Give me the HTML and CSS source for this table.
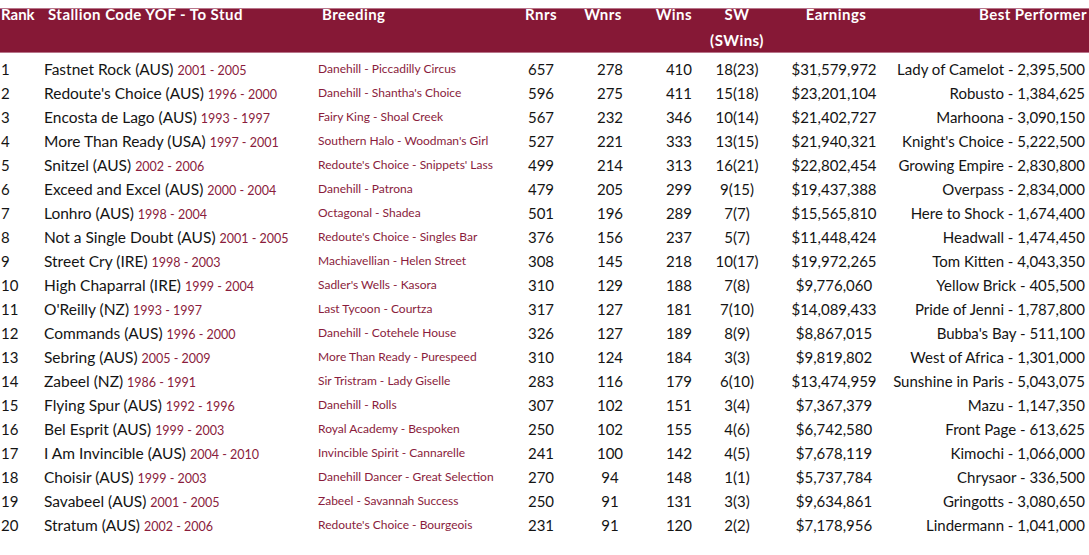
FILE: index.html
```html
<!DOCTYPE html>
<html>
<head>
<meta charset="utf-8">
<link rel="stylesheet" href="styles.css">
</head>
<body>
<div class="table">
  <div class="head">
    <div class="hc h-rank">Rank</div>
    <div class="hc h-stallion">Stallion Code YOF - To Stud</div>
    <div class="hc h-breed">Breeding</div>
    <div class="hc h-rnrs">Rnrs</div>
    <div class="hc h-wnrs">Wnrs</div>
    <div class="hc h-wins">Wins</div>
    <div class="hc h-sw">SW<br>(SWins)</div>
    <div class="hc h-earn">Earnings</div>
    <div class="hc h-best">Best Performer</div>
  </div>
  <div class="body">
    <div class="row"><div class="c-rank">1</div><div class="c-stallion">Fastnet Rock (AUS) <span class="yr">2001 - 2005</span></div><div class="c-breed">Danehill - Piccadilly Circus</div><div class="c-rnrs">657</div><div class="c-wnrs">278</div><div class="c-wins">410</div><div class="c-sw">18(23)</div><div class="c-earn">$31,579,972</div><div class="c-best">Lady of Camelot - 2,395,500</div></div>
    <div class="row"><div class="c-rank">2</div><div class="c-stallion">Redoute's Choice (AUS) <span class="yr">1996 - 2000</span></div><div class="c-breed">Danehill - Shantha's Choice</div><div class="c-rnrs">596</div><div class="c-wnrs">275</div><div class="c-wins">411</div><div class="c-sw">15(18)</div><div class="c-earn">$23,201,104</div><div class="c-best">Robusto - 1,384,625</div></div>
    <div class="row"><div class="c-rank">3</div><div class="c-stallion">Encosta de Lago (AUS) <span class="yr">1993 - 1997</span></div><div class="c-breed">Fairy King - Shoal Creek</div><div class="c-rnrs">567</div><div class="c-wnrs">232</div><div class="c-wins">346</div><div class="c-sw">10(14)</div><div class="c-earn">$21,402,727</div><div class="c-best">Marhoona - 3,090,150</div></div>
    <div class="row"><div class="c-rank">4</div><div class="c-stallion">More Than Ready (USA) <span class="yr">1997 - 2001</span></div><div class="c-breed">Southern Halo - Woodman's Girl</div><div class="c-rnrs">527</div><div class="c-wnrs">221</div><div class="c-wins">333</div><div class="c-sw">13(15)</div><div class="c-earn">$21,940,321</div><div class="c-best">Knight's Choice - 5,222,500</div></div>
    <div class="row"><div class="c-rank">5</div><div class="c-stallion">Snitzel (AUS) <span class="yr">2002 - 2006</span></div><div class="c-breed">Redoute's Choice - Snippets' Lass</div><div class="c-rnrs">499</div><div class="c-wnrs">214</div><div class="c-wins">313</div><div class="c-sw">16(21)</div><div class="c-earn">$22,802,454</div><div class="c-best">Growing Empire - 2,830,800</div></div>
    <div class="row"><div class="c-rank">6</div><div class="c-stallion">Exceed and Excel (AUS) <span class="yr">2000 - 2004</span></div><div class="c-breed">Danehill - Patrona</div><div class="c-rnrs">479</div><div class="c-wnrs">205</div><div class="c-wins">299</div><div class="c-sw">9(15)</div><div class="c-earn">$19,437,388</div><div class="c-best">Overpass - 2,834,000</div></div>
    <div class="row"><div class="c-rank">7</div><div class="c-stallion">Lonhro (AUS) <span class="yr">1998 - 2004</span></div><div class="c-breed">Octagonal - Shadea</div><div class="c-rnrs">501</div><div class="c-wnrs">196</div><div class="c-wins">289</div><div class="c-sw">7(7)</div><div class="c-earn">$15,565,810</div><div class="c-best">Here to Shock - 1,674,400</div></div>
    <div class="row"><div class="c-rank">8</div><div class="c-stallion">Not a Single Doubt (AUS) <span class="yr">2001 - 2005</span></div><div class="c-breed">Redoute's Choice - Singles Bar</div><div class="c-rnrs">376</div><div class="c-wnrs">156</div><div class="c-wins">237</div><div class="c-sw">5(7)</div><div class="c-earn">$11,448,424</div><div class="c-best">Headwall - 1,474,450</div></div>
    <div class="row"><div class="c-rank">9</div><div class="c-stallion">Street Cry (IRE) <span class="yr">1998 - 2003</span></div><div class="c-breed">Machiavellian - Helen Street</div><div class="c-rnrs">308</div><div class="c-wnrs">145</div><div class="c-wins">218</div><div class="c-sw">10(17)</div><div class="c-earn">$19,972,265</div><div class="c-best">Tom Kitten - 4,043,350</div></div>
    <div class="row"><div class="c-rank">10</div><div class="c-stallion">High Chaparral (IRE) <span class="yr">1999 - 2004</span></div><div class="c-breed">Sadler's Wells - Kasora</div><div class="c-rnrs">310</div><div class="c-wnrs">129</div><div class="c-wins">188</div><div class="c-sw">7(8)</div><div class="c-earn">$9,776,060</div><div class="c-best">Yellow Brick - 405,500</div></div>
    <div class="row"><div class="c-rank">11</div><div class="c-stallion">O'Reilly (NZ) <span class="yr">1993 - 1997</span></div><div class="c-breed">Last Tycoon - Courtza</div><div class="c-rnrs">317</div><div class="c-wnrs">127</div><div class="c-wins">181</div><div class="c-sw">7(10)</div><div class="c-earn">$14,089,433</div><div class="c-best">Pride of Jenni - 1,787,800</div></div>
    <div class="row"><div class="c-rank">12</div><div class="c-stallion">Commands (AUS) <span class="yr">1996 - 2000</span></div><div class="c-breed">Danehill - Cotehele House</div><div class="c-rnrs">326</div><div class="c-wnrs">127</div><div class="c-wins">189</div><div class="c-sw">8(9)</div><div class="c-earn">$8,867,015</div><div class="c-best">Bubba's Bay - 511,100</div></div>
    <div class="row"><div class="c-rank">13</div><div class="c-stallion">Sebring (AUS) <span class="yr">2005 - 2009</span></div><div class="c-breed">More Than Ready - Purespeed</div><div class="c-rnrs">310</div><div class="c-wnrs">124</div><div class="c-wins">184</div><div class="c-sw">3(3)</div><div class="c-earn">$9,819,802</div><div class="c-best">West of Africa - 1,301,000</div></div>
    <div class="row"><div class="c-rank">14</div><div class="c-stallion">Zabeel (NZ) <span class="yr">1986 - 1991</span></div><div class="c-breed">Sir Tristram - Lady Giselle</div><div class="c-rnrs">283</div><div class="c-wnrs">116</div><div class="c-wins">179</div><div class="c-sw">6(10)</div><div class="c-earn">$13,474,959</div><div class="c-best">Sunshine in Paris - 5,043,075</div></div>
    <div class="row"><div class="c-rank">15</div><div class="c-stallion">Flying Spur (AUS) <span class="yr">1992 - 1996</span></div><div class="c-breed">Danehill - Rolls</div><div class="c-rnrs">307</div><div class="c-wnrs">102</div><div class="c-wins">151</div><div class="c-sw">3(4)</div><div class="c-earn">$7,367,379</div><div class="c-best">Mazu - 1,147,350</div></div>
    <div class="row"><div class="c-rank">16</div><div class="c-stallion">Bel Esprit (AUS) <span class="yr">1999 - 2003</span></div><div class="c-breed">Royal Academy - Bespoken</div><div class="c-rnrs">250</div><div class="c-wnrs">102</div><div class="c-wins">155</div><div class="c-sw">4(6)</div><div class="c-earn">$6,742,580</div><div class="c-best">Front Page - 613,625</div></div>
    <div class="row"><div class="c-rank">17</div><div class="c-stallion">I Am Invincible (AUS) <span class="yr">2004 - 2010</span></div><div class="c-breed">Invincible Spirit - Cannarelle</div><div class="c-rnrs">241</div><div class="c-wnrs">100</div><div class="c-wins">142</div><div class="c-sw">4(5)</div><div class="c-earn">$7,678,119</div><div class="c-best">Kimochi - 1,066,000</div></div>
    <div class="row"><div class="c-rank">18</div><div class="c-stallion">Choisir (AUS) <span class="yr">1999 - 2003</span></div><div class="c-breed">Danehill Dancer - Great Selection</div><div class="c-rnrs">270</div><div class="c-wnrs">94</div><div class="c-wins">148</div><div class="c-sw">1(1)</div><div class="c-earn">$5,737,784</div><div class="c-best">Chrysaor - 336,500</div></div>
    <div class="row"><div class="c-rank">19</div><div class="c-stallion">Savabeel (AUS) <span class="yr">2001 - 2005</span></div><div class="c-breed">Zabeel - Savannah Success</div><div class="c-rnrs">250</div><div class="c-wnrs">91</div><div class="c-wins">131</div><div class="c-sw">3(3)</div><div class="c-earn">$9,634,861</div><div class="c-best">Gringotts - 3,080,650</div></div>
    <div class="row"><div class="c-rank">20</div><div class="c-stallion">Stratum (AUS) <span class="yr">2002 - 2006</span></div><div class="c-breed">Redoute's Choice - Bourgeois</div><div class="c-rnrs">231</div><div class="c-wnrs">91</div><div class="c-wins">120</div><div class="c-sw">2(2)</div><div class="c-earn">$7,178,956</div><div class="c-best">Lindermann - 1,041,000</div></div>
  </div>
</div>
</body>
</html>
```
FILE: styles.css
```css
* { box-sizing: border-box; }
html, body { margin: 0; padding: 0; background: #ffffff; }
body {
  font-family: "Lato", "Noto Sans", sans-serif;
  color: #141414;
  width: 1089px;
  overflow: hidden;
}
.table { width: 1089px; padding-top: 1px; }
.head, .row {
  display: grid;
  grid-template-columns: 44px 274px 192px 62px 76px 44px 90px 104px 199px 4px;
}
.head {
  height: 52px;
  background: linear-gradient(to bottom, transparent 7px, #b8758a 7px, #b8758a 8px, #861836 8px, #861836 51px, #b8758a 51px);
  color: #ffffff;
  font-weight: 700;
  font-size: 15px;
  letter-spacing: 0.45px;
  line-height: 26px;
}
.hc { white-space: nowrap; }
.h-rank { padding-left: 1px; letter-spacing: 0; }
.h-stallion { padding-left: 4px; }
.h-breed { padding-left: 4px; }
.h-rnrs { text-align: center; margin-left: -4px; margin-right: -4px; }
.h-wnrs { text-align: center; padding-right: 8px; margin-left: -6px; }
.h-wins { text-align: right; margin-left: -10px; }
.h-sw { text-align: center; }
.h-earn { text-align: center; padding-left: 4px; }
.h-best { text-align: right; margin-right: -2px; }

.body { padding-top: 4px; }
.row {
  height: 24px;
  line-height: 24px;
  font-size: 15px;
  white-space: nowrap;
}
.c-rank { padding-left: 1px; }
.c-stallion { font-size: 15.5px; }
.yr { color: #8a1c3c; font-size: 12.5px; }
.c-breed { color: #8a1c3c; font-size: 12px; }
.c-rnrs, .c-wnrs, .c-sw, .c-earn { text-align: center; }
.c-wins { text-align: right; }
.c-best { text-align: right; margin-left: -20px; }
```
